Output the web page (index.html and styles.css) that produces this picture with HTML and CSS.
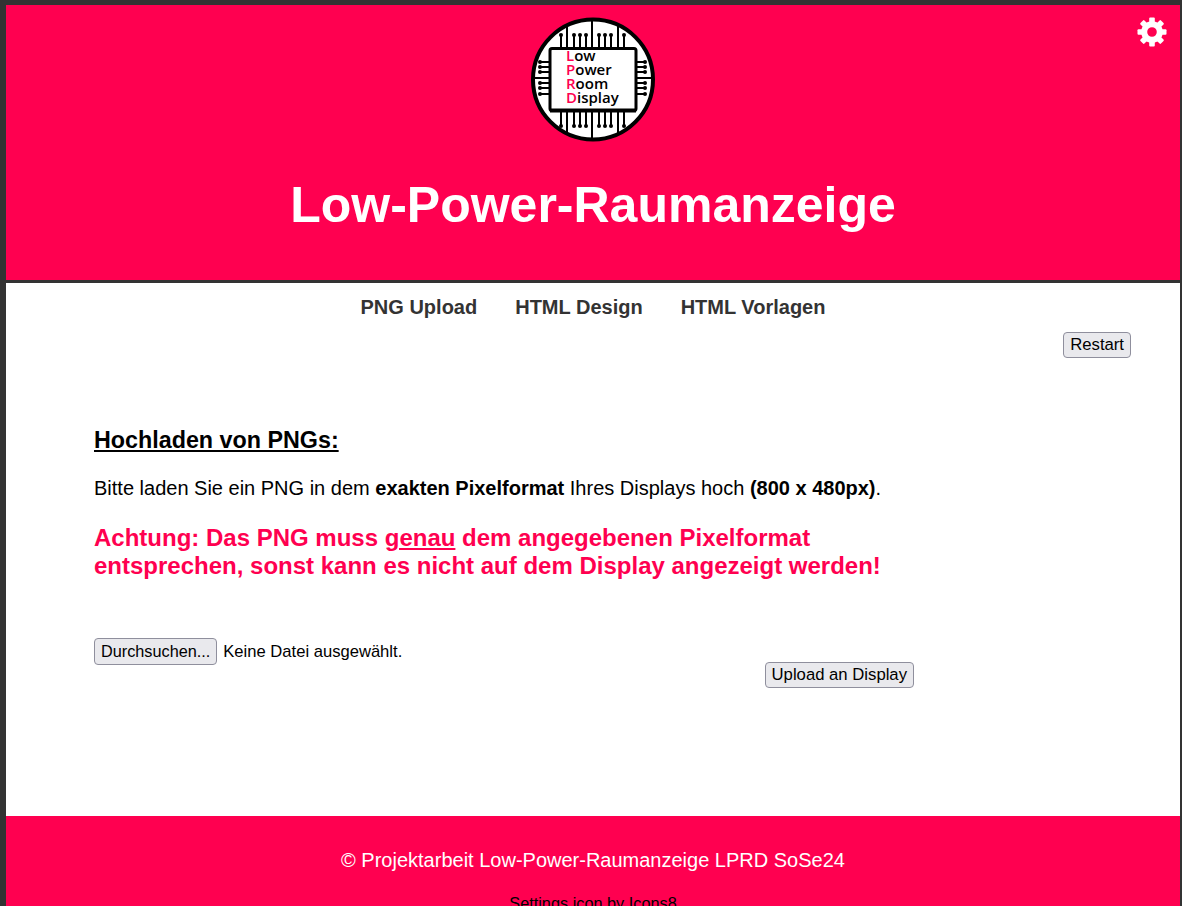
FILE: index.html
```html
<!DOCTYPE html>
<html lang="de">
<head>
  <meta charset="UTF-8" />
  <meta name="viewport" content="width=device-width, initial-scale=1.0"/>
  <title>Low-Power-Raumanzeige</title>
  <link rel="stylesheet" href="styles.css">
</head>
<body>
  <header class="site-header">
    <!-- settings gear -->
    <a class="settings" href="#" aria-label="Einstellungen">
      <svg width="32" height="32" viewBox="0 0 32 32">
        <circle cx="16" cy="16" r="7.8" fill="none" stroke="#fff" stroke-width="6"/>
        <g fill="#fff">
          <rect x="13.2" y="1.5" width="5.6" height="6" rx="1"/>
          <rect x="13.2" y="1.5" width="5.6" height="6" rx="1" transform="rotate(45 16 16)"/>
          <rect x="13.2" y="1.5" width="5.6" height="6" rx="1" transform="rotate(90 16 16)"/>
          <rect x="13.2" y="1.5" width="5.6" height="6" rx="1" transform="rotate(135 16 16)"/>
          <rect x="13.2" y="1.5" width="5.6" height="6" rx="1" transform="rotate(180 16 16)"/>
          <rect x="13.2" y="1.5" width="5.6" height="6" rx="1" transform="rotate(225 16 16)"/>
          <rect x="13.2" y="1.5" width="5.6" height="6" rx="1" transform="rotate(270 16 16)"/>
          <rect x="13.2" y="1.5" width="5.6" height="6" rx="1" transform="rotate(315 16 16)"/>
        </g>
      </svg>
    </a>

    <!-- logo, coordinates follow the page position of the circle -->
    <svg class="logo" width="126" height="127" viewBox="531 16 126 127">
      <circle cx="594" cy="79.5" r="60" fill="#fff" stroke="#000" stroke-width="4"/>
      <g stroke="#000" stroke-width="2" fill="none">
        <path d="M593 19V48M593 112V140M568 24V48M619 24V48M568 112V135M619 112V135"/>
        <path d="M534 78H550M638 78H654"/>
        <path d="M562 48V35M575 48V35M581 48V35M587 48V35M600 48V35M606 48V35M612 48V35M625 48V35"/>
        <path d="M562 112V126M575 112V126M581 112V126M587 112V126M600 112V126M606 112V126M612 112V126M625 112V126"/>
        <path d="M550 62H541M550 67H541M550 72H541M550 83H541M550 88H541M550 94H541"/>
        <path d="M638 62H646M638 67H646M638 72H646M638 83H646M638 88H646M638 94H646"/>
      </g>
      <g fill="#000">
        <circle cx="562" cy="35" r="2"/><circle cx="575" cy="35" r="2"/><circle cx="581" cy="35" r="2"/><circle cx="587" cy="35" r="2"/>
        <circle cx="600" cy="35" r="2"/><circle cx="606" cy="35" r="2"/><circle cx="612" cy="35" r="2"/><circle cx="625" cy="35" r="2"/>
        <circle cx="562" cy="126" r="2"/><circle cx="575" cy="126" r="2"/><circle cx="581" cy="126" r="2"/><circle cx="587" cy="126" r="2"/>
        <circle cx="600" cy="126" r="2"/><circle cx="606" cy="126" r="2"/><circle cx="612" cy="126" r="2"/><circle cx="625" cy="126" r="2"/>
        <circle cx="541" cy="62" r="2"/><circle cx="541" cy="67" r="2"/><circle cx="541" cy="72" r="2"/><circle cx="541" cy="83" r="2"/><circle cx="541" cy="88" r="2"/><circle cx="541" cy="94" r="2"/>
        <circle cx="646" cy="62" r="2"/><circle cx="646" cy="67" r="2"/><circle cx="646" cy="72" r="2"/><circle cx="646" cy="83" r="2"/><circle cx="646" cy="88" r="2"/><circle cx="646" cy="94" r="2"/>
      </g>
      <rect x="551" y="48.5" width="86" height="62" rx="2" fill="#fff" stroke="#000" stroke-width="3"/>
      <path d="M551 110.5H637" stroke="#000" stroke-width="4"/>
      <g class="logo-text">
        <text x="567" y="61"><tspan class="logo-initial">L</tspan>ow</text>
        <text x="567" y="75"><tspan class="logo-initial">P</tspan>ower</text>
        <text x="567" y="89"><tspan class="logo-initial">R</tspan>oom</text>
        <text x="567" y="103"><tspan class="logo-initial">D</tspan>isplay</text>
      </g>
    </svg>

    <h1>Low-Power-Raumanzeige</h1>
  </header>

  <nav class="main-nav">
    <a href="#">PNG Upload</a>
    <a href="#">HTML Design</a>
    <a href="#">HTML Vorlagen</a>
  </nav>

  <div class="restart-row">
    <button class="btn" type="button">Restart</button>
  </div>

  <main class="content">
    <h2>Hochladen von PNGs:</h2>
    <p class="intro">Bitte laden Sie ein PNG in dem <b>exakten Pixelformat</b> Ihres Displays hoch <b>(800 x 480px)</b>.</p>
    <p class="warning">Achtung: Das PNG muss <u>genau</u> dem angegebenen Pixelformat<br>entsprechen, sonst kann es nicht auf dem Display angezeigt werden!</p>

    <form class="upload-form">
      <div class="file-row">
        <button class="btn btn-browse" type="button">Durchsuchen...</button>
        <span class="file-name">Keine Datei ausgewählt.</span>
      </div>
      <div class="submit-row">
        <button class="btn" type="button">Upload an Display</button>
      </div>
    </form>
  </main>

  <footer class="site-footer">
    <p class="copyright">© Projektarbeit Low-Power-Raumanzeige LPRD SoSe24</p>
    <p class="credit">Settings <a href="#">icon</a> by <a href="#">Icons8</a></p>
  </footer>
</body>
</html>
```

FILE: styles.css
```css
html {
  height: 100%;
  overflow: hidden;
}
body {
  margin: 0;
  height: 100%;
  box-sizing: border-box;
  overflow: hidden;
  background: #fff;
  border-style: solid;
  border-color: #333;
  border-width: 5px 2px 0 6px;
  font-family: "Liberation Sans", Arial, sans-serif;
  color: #000;
}

.site-header {
  position: relative;
  height: 264px;
  padding-top: 11px;
  background: #ff0050;
  border-bottom: 3px solid #333;
  text-align: center;
}
.settings {
  position: absolute;
  top: 11px;
  right: 12px;
  line-height: 0;
}
.logo {
  display: block;
  margin: 0 auto;
}
.logo-text text {
  font-family: "Open Sans", sans-serif;
  font-size: 15px;
  font-weight: 600;
  fill: #000;
}
.logo-text .logo-initial {
  fill: #ff0050;
}
.site-header h1 {
  margin: 32px 0 0;
  font-size: 50px;
  line-height: 60px;
  font-weight: bold;
  color: #fff;
}

.main-nav {
  display: flex;
  justify-content: center;
  gap: 38px;
  padding-top: 13px;
  line-height: 23px;
}
.main-nav a {
  font-size: 20px;
  font-weight: bold;
  color: #333;
  text-decoration: none;
}

.restart-row {
  display: flex;
  justify-content: flex-end;
  padding: 13px 49px 0 0;
}
.btn {
  height: 26px;
  padding: 0 6px;
  font-family: inherit;
  font-size: 16.7px;
  color: #000;
  background: #e9e9ed;
  border: 1px solid #8f8f9d;
  border-radius: 4px;
}
.btn-browse {
  height: 27px;
  font-size: 16.25px;
}

.content {
  height: 458px;
  box-sizing: border-box;
  padding: 70px 0 0 88px;
}
.content h2 {
  margin: 0;
  font-size: 23.3px;
  line-height: 25px;
  text-decoration: underline;
}
.intro {
  margin: 24px 0 0;
  font-size: 20px;
  line-height: 23px;
}
.warning {
  margin: 24px 0 0;
  font-size: 24px;
  line-height: 28px;
  font-weight: bold;
  color: #ff0050;
}

.upload-form {
  width: 820px;
  margin-top: 58px;
}
.file-row {
  display: flex;
  align-items: center;
  gap: 6px;
}
.file-name {
  font-size: 16.6px;
}
.submit-row {
  display: flex;
  justify-content: flex-end;
  margin-top: -3px;
}

.site-footer {
  height: 120px;
  background: #ff0050;
  text-align: center;
  overflow: hidden;
}
.copyright {
  margin: 33px 0 0;
  font-size: 20px;
  line-height: 23px;
  color: #fff;
}
.credit {
  margin: 21px 0 0;
  font-size: 16.3px;
  line-height: 20px;
  color: #000;
}
.credit a {
  color: #000;
  text-decoration: none;
}
```
